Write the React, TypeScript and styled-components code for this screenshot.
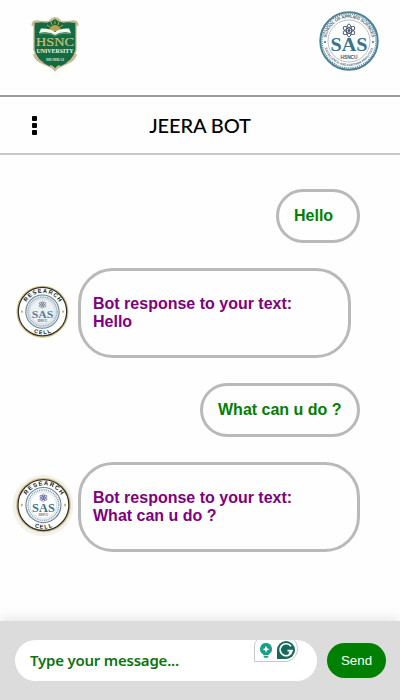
import React from "react";
import styled, { createGlobalStyle } from "styled-components";

const GlobalStyle = createGlobalStyle`
  * { box-sizing: border-box; }
  body { margin: 0; background: #fff; }
`;

const Page = styled.div`
  width: 400px;
  height: 700px;
  display: flex;
  flex-direction: column;
  overflow: hidden;
  background: #fefefe;
  font-family: "Liberation Sans", Arial, sans-serif;
`;

const Header = styled.header`
  height: 95px;
  flex: none;
  display: flex;
  justify-content: space-between;
  align-items: flex-start;
  padding: 11px 21px 0 30px;
`;

const NavBar = styled.nav`
  height: 60px;
  flex: none;
  display: grid;
  grid-template-columns: 70px 1fr 70px;
  align-items: center;
  border-top: 2px solid #9c9c9c;
  border-bottom: 2px solid #c9c9c9;
`;

const MenuButton = styled.button`
  width: 5px;
  height: 19px;
  margin: 0 0 0 32px;
  padding: 0;
  border: 0;
  background: none;
  display: flex;
  flex-direction: column;
  justify-content: space-between;
`;

const MenuDot = styled.span`
  width: 5px;
  height: 5px;
  border-radius: 1px;
  background: #000;
`;

const Title = styled.h1`
  margin: 0;
  text-align: center;
  white-space: nowrap;
  font: 500 20px/24px "Trebuchet MS", Lato, sans-serif;
  letter-spacing: -0.1px;
  color: #000;
`;

const Chat = styled.main`
  flex: 1;
  display: flex;
  flex-direction: column;
  padding-top: 34px;
  gap: 25px;
`;

const Row = styled.div<{ $user?: boolean }>`
  display: flex;
  align-items: center;
  justify-content: ${(p) => (p.$user ? "flex-end" : "flex-start")};
  padding: ${(p) => (p.$user ? "0 40px 0 0" : "0 0 0 12px")};
`;

const UserBubble = styled.div<{ $width: number }>`
  width: ${(p) => p.$width}px;
  height: 54px;
  padding: 15px;
  border: 3px solid #b9b9b9;
  border-radius: 27px;
  font-weight: bold;
  font-size: 16px;
  line-height: 18px;
  white-space: nowrap;
  color: green;
`;

const BotBubble = styled.div<{ $width: number }>`
  width: ${(p) => p.$width}px;
  height: 90px;
  margin-left: 4px;
  padding: 24px 12px;
  border: 3px solid #b9b9b9;
  border-radius: 35px;
  font-weight: bold;
  font-size: 16px;
  line-height: 18px;
  white-space: pre-line;
  color: purple;
`;

const Footer = styled.footer`
  height: 79px;
  flex: none;
  display: flex;
  align-items: center;
  gap: 10px;
  padding: 0 14px 0 15px;
  background: #dcdcdc;
  box-shadow: 0 -2px 12px rgba(0, 0, 0, 0.1);
`;

const MessageField = styled.div`
  width: 302px;
  height: 41px;
  display: flex;
  align-items: center;
  justify-content: space-between;
  padding: 0 17px 0 15px;
  border-radius: 21px;
  overflow: hidden;
  background: #fff;
`;

const Placeholder = styled.span`
  padding-bottom: 2px;
  white-space: nowrap;
  font: 600 15px/20px "Trebuchet MS", "Noto Sans", sans-serif;
  letter-spacing: -0.22px;
  color: #107210;
`;

const SendButton = styled.button`
  width: 59px;
  height: 35px;
  padding: 0;
  border: 0;
  border-radius: 18px;
  background: green;
  color: #fff;
  font: 13.33px "Liberation Sans", Arial, sans-serif;
`;

const Drawing = styled.svg`
  display: block;
  flex: none;
`;

const AssistDrawing = styled(Drawing)`
  align-self: flex-start;
`;

function UniversityCrest() {
  return (
    <Drawing width="50" height="64" viewBox="0 0 50 64">
      <path
        d="M4 11 Q12 10 17 11 Q22 10 25 7 Q28 10 33 11 Q38 10 46 11 V39 Q43 51 32 55 Q27 57 25 59 Q23 57 18 55 Q7 51 4 39Z"
        fill="#146b43"
        stroke="#c5b792"
        strokeWidth="1.3"
      />
      <path d="M2.5 15 Q2 9 9 10.5 M47.5 15 Q48 9 41 10.5 M20 10 Q25 4 30 10 M4 43 Q5 49 13 52 M46 43 Q45 49 37 52 M20 55 Q24 56 25 60 Q26 56 30 55" fill="none" stroke="#c9b98e" strokeWidth="2" />
      <path d="M19 20 A6 6 0 0 1 31 20" fill="#b9a24e" />
      <path d="M20 16 l-3-2 M22 14 l-1-3 M25 13 V10 M28 14 l1-3 M30 16 l3-2" stroke="#b9a24e" strokeWidth="1" />
      <path d="M11 17.5 Q20 17 25 21 Q30 17 39 17.5 L41 22 Q31 20 25 24 Q19 20 9 22Z" fill="#f4f7ed" />
      <path d="M9 23 Q19 21 25 25 Q31 21 41 23" fill="none" stroke="#90ab83" strokeWidth="0.7" />
      <text x="25" y="35" textAnchor="middle" textLength="38" lengthAdjust="spacingAndGlyphs" fontFamily="Liberation Serif, serif" fontSize="13" fill="#c9c179" stroke="#c9c179" strokeWidth="0.2">HSNC</text>
      <text x="25" y="42.2" textAnchor="middle" textLength="37" lengthAdjust="spacingAndGlyphs" fontFamily="Liberation Serif, serif" fontWeight="bold" fontSize="6.3" fill="#eef6e8">UNIVERSITY</text>
      <text x="25" y="50" textAnchor="middle" textLength="18" lengthAdjust="spacingAndGlyphs" fontFamily="Liberation Serif, serif" fontWeight="bold" fontSize="4.5" fill="#d9e0c2">MUMBAI</text>
    </Drawing>
  );
}

function Atom({ color }: { color: string }) {
  return (
    <g fill="none" stroke={color} strokeWidth="0.9">
      <ellipse cx="30" cy="19.5" rx="2.5" ry="6.5" />
      <ellipse cx="30" cy="19.5" rx="2.5" ry="6.5" transform="rotate(60 30 19.5)" />
      <ellipse cx="30" cy="19.5" rx="2.5" ry="6.5" transform="rotate(120 30 19.5)" />
      <circle cx="30" cy="19.5" r="1" fill={color} />
    </g>
  );
}

function SchoolSeal() {
  return (
    <Drawing width="60" height="60" viewBox="0 0 60 60">
      <defs>
        <path id="school-top" d="M7 30 A23 23 0 0 1 53 30" />
        <path id="school-bottom" d="M4.8 32 A25.3 25.3 0 0 0 55.2 32" />
      </defs>
      <circle cx="30" cy="30" r="28.7" fill="#fff" stroke="#4d8194" strokeWidth="2" />
      <circle cx="30" cy="30" r="27" fill="none" stroke="#5b8b9d" strokeWidth="1.3" strokeDasharray="1.2 1" />
      <circle cx="30" cy="30" r="21" fill="none" stroke="#8199aa" strokeWidth="0.6" />
      <text fontFamily="Liberation Sans, sans-serif" fontSize="4.5" fontWeight="bold" fill="#52687d">
        <textPath href="#school-top" startOffset="50%" textAnchor="middle" textLength="65">SCHOOL OF APPLIED SCIENCES</textPath>
      </text>
      <text fontFamily="Liberation Sans, sans-serif" fontSize="3.2" fontWeight="bold" fill="#52687d">
        <textPath href="#school-bottom" startOffset="50%" textAnchor="middle" textLength="64">EXCELLENCE AND FURTHER ANALYTICS</textPath>
      </text>
      <Atom color="#364c68" />
      <text x="30" y="40.3" textAnchor="middle" textLength="37" lengthAdjust="spacingAndGlyphs" fontFamily="Liberation Serif, serif" fontWeight="bold" fontSize="18" fill="#36758c">SAS</text>
      <text x="30" y="47.5" textAnchor="middle" textLength="17" lengthAdjust="spacingAndGlyphs" fontFamily="Liberation Sans, sans-serif" fontWeight="bold" fontSize="4.8" fill="#42546c">HSNCU</text>
      <circle cx="6" cy="31" r="0.9" fill="#36586f" />
      <circle cx="54" cy="31" r="0.9" fill="#36586f" />
    </Drawing>
  );
}

function ResearchSeal({ halo }: { halo?: boolean }) {
  const id = halo ? "halo" : "plain";
  const placement = halo ? "translate(-.5 -2.9) scale(1.03)" : "translate(.1 -.7) scale(.98)";
  const color = halo ? "#3c718b" : "#587c95";
  return (
    <Drawing width="62" height="64" viewBox="0 0 62 64">
      <defs>
        <path id={`${id}-top`} d="M12 32 A19.3 19.3 0 0 1 50.6 32" />
        <path id={`${id}-bottom`} d="M8 32 A23 23 0 0 0 54 32" />
      </defs>
      {halo && <circle cx="31" cy="30.6" r="30.5" fill="#f2f1ed" />}
      <g transform={placement}>
        <circle cx="31" cy="32" r="25.8" fill="#fff" stroke="#d5c489" strokeWidth="1.4" />
        <circle cx="31" cy="32" r="24.7" fill="#fff" stroke="#343329" strokeWidth="1.3" />
        <text fontFamily="Liberation Sans, sans-serif" fontSize="5.8" fontWeight="bold" fill="#181818">
          <textPath href={`#${id}-top`} startOffset="50%" textAnchor="middle" textLength="40">RESEARCH</textPath>
        </text>
        <text fontFamily="Liberation Sans, sans-serif" fontSize="5.5" fontWeight="bold" fill="#181818">
          <textPath href={`#${id}-bottom`} startOffset="50%" textAnchor="middle" textLength="18">CELL</textPath>
        </text>
        <circle cx="31" cy="32" r="17" fill={halo ? "#fbfcfd" : "#e9eef2"} stroke="#67879c" strokeWidth="1.1" />
        <circle cx="31" cy="32" r="14.8" fill="none" stroke="#8da3b3" strokeWidth="1.5" strokeDasharray="1 0.8" />
        <circle cx="31" cy="32" r="13" fill={halo ? "#fff" : "#edf1f4"} stroke="#a5b5c2" strokeWidth="0.4" />
        <g transform="translate(13 13.2) scale(.6)"><Atom color={halo ? "#414785" : "#60758a"} /></g>
        <text x="31" y="38.5" textAnchor="middle" textLength="22" lengthAdjust="spacingAndGlyphs" fontFamily="Liberation Serif, serif" fontWeight="bold" fontSize="11.5" fill={color}>SAS</text>
        <text x="31" y="42.8" textAnchor="middle" textLength="9.5" lengthAdjust="spacingAndGlyphs" fontFamily="Liberation Serif, serif" fontWeight="bold" fontSize="3.3" fill="#465566">HSNCU</text>
        <path d="M10 30.3 l1.2 1.7 -1.2 1.7 -1.2 -1.7Z M52 30.3 l1.2 1.7 -1.2 1.7 -1.2 -1.7Z" fill="#c9ae57" />
      </g>
    </Drawing>
  );
}

function WritingAssistant() {
  return (
    <AssistDrawing width="46" height="24" viewBox="0 0 46 24">
      <path d="M3 0 Q0.5 2 0.5 6 V21.5 H33 Q41 20 43.5 11 Q44 4 40 0" fill="#fff" stroke="#c5c9ce" />
      <path d="M12 3 a6 6 0 0 0 -3.3 11 l1 1.2 h4.6 l1-1.2 A6 6 0 0 0 12 3Z M9.7 16 h4.6 v.8 q-.5 1-1.3 1 h-2 q-1-.1-1.3-1Z" fill="#15a18a" />
      <path d="M12 5.8 l1 2.5 2.5 1 -2.5 1 -1 2.5 -1-2.5 -2.5-1 2.5-1Z" fill="#fff" />
      <path d="M32 1 a9 9 0 1 1 0 18 H23 V10 A9 9 0 0 1 32 1Z" fill="#17695c" />
      <path d="M37 6.3 A6 6 0 1 0 38 10.7 H33.5 M35 13.7 L38 10.7" fill="none" stroke="#fff" strokeWidth="1.7" />
    </AssistDrawing>
  );
}

export default function App() {
  return (
    <Page>
      <GlobalStyle />
      <Header>
        <UniversityCrest />
        <SchoolSeal />
      </Header>
      <NavBar>
        <MenuButton aria-label="Menu">
          <MenuDot /><MenuDot /><MenuDot />
        </MenuButton>
        <Title>JEERA BOT</Title>
      </NavBar>
      <Chat>
        <Row $user><UserBubble $width={84}>Hello</UserBubble></Row>
        <Row>
          <ResearchSeal />
          <BotBubble $width={273}>{"Bot response to your text:\nHello"}</BotBubble>
        </Row>
        <Row $user><UserBubble $width={160}>What can u do ?</UserBubble></Row>
        <Row>
          <ResearchSeal halo />
          <BotBubble $width={282}>{"Bot response to your text:\nWhat can u do ?"}</BotBubble>
        </Row>
      </Chat>
      <Footer>
        <MessageField>
          <Placeholder>Type your message...</Placeholder>
          <WritingAssistant />
        </MessageField>
        <SendButton>Send</SendButton>
      </Footer>
    </Page>
  );
}
